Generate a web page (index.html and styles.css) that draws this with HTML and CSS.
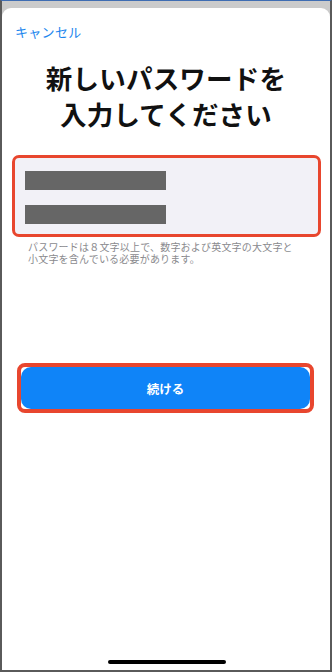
FILE: index.html
```html
<!DOCTYPE html>
<html lang="ja">
<head>
<meta charset="utf-8">
<link rel="stylesheet" href="styles.css">
</head>
<body>
<div class="device">
  <div class="sheet">
    <div class="cancel">キャンセル</div>
    <h1 class="title">新しいパスワードを<br>入力してください</h1>
    <div class="field-box">
      <div class="bar"></div>
      <div class="bar"></div>
    </div>
    <p class="hint">パスワードは８文字以上で、数字および英文字の大文字と小文字を含んでいる必要があります。</p>
    <div class="btn-wrap">
      <div class="btn">続ける</div>
    </div>
    <div class="spacer"></div>
    <div class="home"></div>
  </div>
</div>
</body>
</html>
```
FILE: styles.css
```css
* { box-sizing: border-box; }
html, body { margin: 0; padding: 0; }
body {
  width: 332px;
  height: 672px;
  font-family: "Noto Sans CJK JP", "Noto Sans", sans-serif;
  overflow: hidden;
}
.device {
  width: 332px;
  height: 672px;
  background: #cbcbcb;
  border-top: 1px solid #3f6db2;
  border-left: 2px solid #5a5a5a;
  border-right: 2px solid #5a5a5a;
  border-bottom: 2px solid #5a5a5a;
  display: flex;
  flex-direction: column;
  padding-top: 7px;
}
.sheet {
  flex: 1;
  background: #fff;
  border-radius: 9px 9px 0 0;
  display: flex;
  flex-direction: column;
  padding: 16px 0 0 0;
}
.cancel {
  color: #1c86ee;
  font-size: 13px;
  line-height: 16px;
  padding-left: 13px;
  letter-spacing: 0.3px;
}
.title {
  margin: 20px 0 0 0;
  text-align: center;
  font-size: 26.5px;
  line-height: 36px;
  font-weight: 700;
  color: #111;
  letter-spacing: 0.2px;
}
.field-box {
  margin: 23px 9px 0 10px;
  height: 82px;
  border: 3px solid #e8462e;
  border-radius: 7px;
  background: #f2f1f7;
  padding: 13px 10px 0 10px;
  display: flex;
  flex-direction: column;
  gap: 15px;
}
.bar {
  width: 141px;
  height: 19px;
  background: #666;
}
.hint {
  margin: 4px 32px 0 26px;
  font-size: 10px;
  line-height: 11.5px;
  color: #8a8a8e;
  letter-spacing: 0.2px;
}
.btn-wrap {
  margin: 99px 16px 0 15px;
  height: 50px;
  border: 4px solid #e8462e;
  border-radius: 8px;
  background: #fff;
}
.btn {
  height: 100%;
  background: #0f84f8;
  border-radius: 10px;
  color: #fff;
  font-size: 12.5px;
  font-weight: 700;
  display: flex;
  align-items: center;
  justify-content: center;
}
.spacer { flex: 1; }
.home {
  width: 118px;
  height: 4px;
  border-radius: 2px;
  background: #000;
  align-self: center;
  margin: 0 0 6px 1px;
}
```
